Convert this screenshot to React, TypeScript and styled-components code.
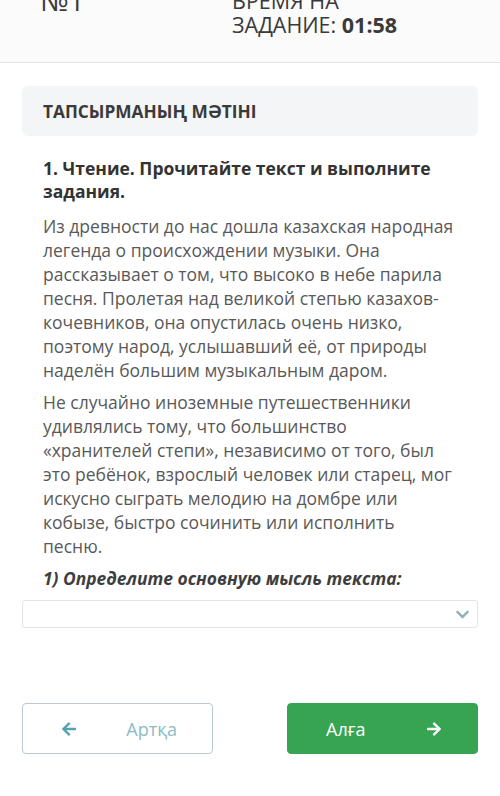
import React from "react"
import styled, { createGlobalStyle } from "styled-components"
import { FaArrowLeft, FaArrowRight, FaChevronDown } from "react-icons/fa"

const GlobalStyle = createGlobalStyle`
    html, body {
        margin: 0;
        padding: 0;
        background: #ffffff;
        font-family: "Open Sans", "Noto Sans", sans-serif;
    }
`

const Header = styled.header`
    height: 63px;
    box-sizing: border-box;
    overflow: hidden;
    display: flex;
    align-items: flex-end;
    padding-bottom: 25px;
    background: #fbfbfb;
    border-bottom: 1px solid #e3e3e3;
    color: #3a3a3a;
`

const TaskNumber = styled.div`
    width: 192px;
    padding-left: 40px;
    font-size: 28px;
    line-height: 28px;
    margin-bottom: 23px;
`

const Timer = styled.div`
    font-size: 21.5px;
    line-height: 24px;
    text-transform: uppercase;

    b { font-weight: 700; }
`

const Main = styled.main`
    padding: 23px 22px 0;
`

const SectionTitle = styled.div`
    height: 50px;
    display: flex;
    align-items: center;
    padding: 0 21px;
    background: #f3f5f7;
    border-radius: 6px;
    font-size: 17.3px;
    font-weight: 700;
    color: #3a3a3a;
`

const Content = styled.div`
    padding: 21px 21px 0;
`

const Question = styled.h2`
    margin: 0 0 11px;
    font-size: 17.5px;
    line-height: 23px;
    font-weight: 700;
    color: #333;
`

const Paragraph = styled.p`
    margin: 0 0 8px;
    font-size: 17.5px;
    line-height: 24px;
    color: #595959;
`

const SubQuestion = styled.p`
    margin: 0 0 10px;
    font-size: 17.4px;
    line-height: 24px;
    font-weight: 700;
    font-style: italic;
    color: #3e3e3e;
`

const Select = styled.div`
    height: 28px;
    box-sizing: border-box;
    border: 1px solid #dfe5e6;
    border-radius: 3px;
    display: flex;
    align-items: center;
    justify-content: flex-end;
    padding-right: 7px;
    color: #8fb1b4;
`

const Nav = styled.nav`
    margin-top: 75px;
    display: flex;
    justify-content: space-between;
`

const NavButton = styled.button<{ $primary?: boolean }>`
    width: 191px;
    height: 51px;
    box-sizing: border-box;
    display: flex;
    align-items: center;
    justify-content: space-between;
    padding: 0 35px 0 38px;
    border-radius: 4px;
    font-family: inherit;
    font-size: 18px;
    border: 1px solid ${p => p.$primary ? "#37a452" : "#b9cbd0"};
    background: ${p => p.$primary ? "#37a452" : "#ffffff"};
    color: ${p => p.$primary ? "#ffffff" : "#8dbcc4"};

    svg {
        color: ${p => p.$primary ? "#ffffff" : "#56a3ae"};
    }
`

export default function App() {
    return (
        <>
            <GlobalStyle />
            <Header>
                <TaskNumber>№1</TaskNumber>
                <Timer>
                    Время на<br />
                    Задание: <b>01:58</b>
                </Timer>
            </Header>
            <Main>
                <SectionTitle>ТАПСЫРМАНЫҢ МӘТІНІ</SectionTitle>
                <Content>
                    <Question>1. Чтение. Прочитайте текст и выполните задания.</Question>
                    <Paragraph>
                        Из древности до нас дошла казахская народная легенда о происхождении музыки. Она
                        рассказывает о том, что высоко в небе парила песня. Пролетая над великой степью казахов-кочевников,
                        она опустилась очень низко, поэтому народ, услышавший её, от природы наделён большим музыкальным даром.
                    </Paragraph>
                    <Paragraph>
                        Не случайно иноземные путешественники удивлялись тому, что большинство «хранителей степи»,
                        независимо от того, был это ребёнок, взрослый человек или старец, мог искусно сыграть мелодию на
                        домбре или кобызе, быстро сочинить или исполнить песню.
                    </Paragraph>
                    <SubQuestion>1) Определите основную мысль текста:</SubQuestion>
                </Content>
                <Select>
                    <FaChevronDown size={15} />
                </Select>
                <Nav>
                    <NavButton>
                        <FaArrowLeft size={16} />
                        <span>Артқа</span>
                    </NavButton>
                    <NavButton $primary>
                        <span>Алға</span>
                        <FaArrowRight size={16} />
                    </NavButton>
                </Nav>
            </Main>
        </>
    )
}
